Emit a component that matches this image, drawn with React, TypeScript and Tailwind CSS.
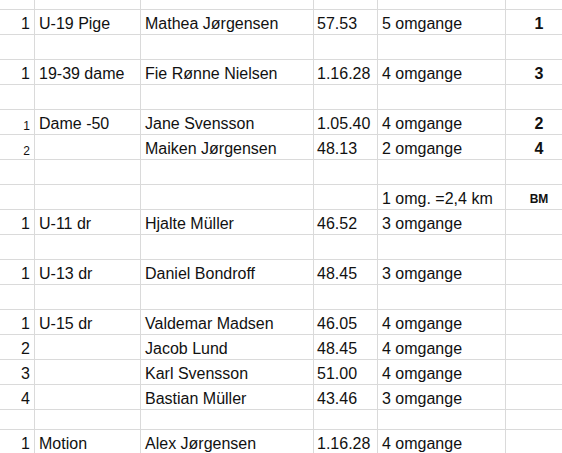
type Row = {
  h: string
  a?: string
  aSmall?: boolean
  b?: string
  c?: string
  d?: string
  e?: string
  f?: string
  fSmall?: boolean
}

const rows: Row[] = [
  { h: "h-[10px]" },
  { h: "h-[25px]", a: "1", b: "U-19 Pige", c: "Mathea Jørgensen", d: "57.53", e: "5 omgange", f: "1" },
  { h: "h-[25px]" },
  { h: "h-[25px]", a: "1", b: "19-39 dame", c: "Fie Rønne Nielsen", d: "1.16.28", e: "4 omgange", f: "3" },
  { h: "h-[25px]" },
  { h: "h-[25px]", a: "1", aSmall: true, b: "Dame -50", c: "Jane Svensson", d: "1.05.40", e: "4 omgange", f: "2" },
  { h: "h-[25px]", a: "2", aSmall: true, c: "Maiken Jørgensen", d: "48.13", e: "2 omgange", f: "4" },
  { h: "h-[25px]" },
  { h: "h-[25px]", e: "1 omg. =2,4 km", f: "BM", fSmall: true },
  { h: "h-[25px]", a: "1", b: "U-11 dr", c: "Hjalte Müller", d: "46.52", e: "3 omgange" },
  { h: "h-[25px]" },
  { h: "h-[25px]", a: "1", b: "U-13 dr", c: "Daniel Bondroff", d: "48.45", e: "3 omgange" },
  { h: "h-[25px]" },
  { h: "h-[25px]", a: "1", b: "U-15 dr", c: "Valdemar Madsen", d: "46.05", e: "4 omgange" },
  { h: "h-[25px]", a: "2", c: "Jacob Lund", d: "48.45", e: "4 omgange" },
  { h: "h-[25px]", a: "3", c: "Karl Svensson", d: "51.00", e: "4 omgange" },
  { h: "h-[25px]", a: "4", c: "Bastian Müller", d: "43.46", e: "3 omgange" },
  { h: "h-[20px]" },
  { h: "h-[25px]", a: "1", b: "Motion", c: "Alex Jørgensen", d: "1.16.28", e: "4 omgange" },
]

const cell = "flex items-end border-r border-b border-[#dadada] pb-[2px] whitespace-nowrap"

export default function App() {
  return (
    <div className="w-[562px] h-[453px] overflow-hidden bg-white text-[16px] leading-none text-[#111] font-['Liberation_Sans',Arial,sans-serif]">
      <div className="grid grid-cols-[35px_106px_173px_64px_128px_67px] w-[573px]">
        {rows.map((r, i) => (
          <div key={i} className="contents">
            <div className={`${cell} ${r.h} justify-end pr-[4px]`}>
              <span className={r.aSmall ? "text-[12px]" : ""}>{r.a}</span>
            </div>
            <div className={`${cell} ${r.h} pl-[4px]`}>{r.b}</div>
            <div className={`${cell} ${r.h} pl-[4px]`}>{r.c}</div>
            <div className={`${cell} ${r.h} pl-[3px]`}>{r.d}</div>
            <div className={`${cell} ${r.h} pl-[4px]`}>{r.e}</div>
            <div className={`${cell} ${r.h} justify-center font-bold`}>
              <span className={r.fSmall ? "text-[12px] pb-[2px]" : ""}>{r.f}</span>
            </div>
          </div>
        ))}
      </div>
    </div>
  )
}
